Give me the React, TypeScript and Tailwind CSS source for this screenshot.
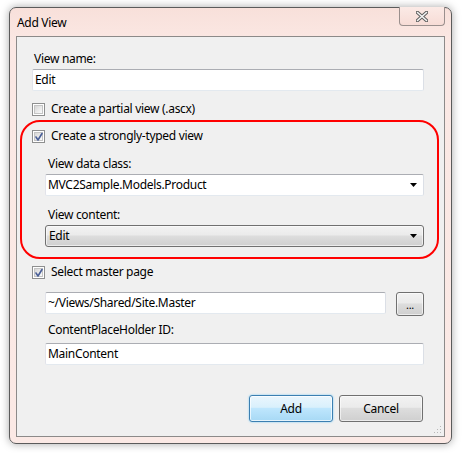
import React from "react";

const font = { fontFamily: '"Segoe UI", "Noto Sans", "Open Sans", sans-serif' };

function CheckBox({ checked }: { checked?: boolean }) {
  return (
    <div className="relative w-[13px] h-[13px] border border-[#8e8f8f] bg-white shrink-0">
      <div className="absolute inset-[1px] bg-[linear-gradient(135deg,#d6d6d6,#fbfbfb)] border border-[#c4c4c4]" />
      {checked && (
        <svg className="absolute left-[1px] top-[1px]" width="10" height="10" viewBox="0 0 10 10">
          <path d="M2 5 L4 8 L8 1.5" fill="none" stroke="#4a5f97" strokeWidth="1.6" strokeLinecap="round" strokeLinejoin="round" />
        </svg>
      )}
    </div>
  );
}

function TextBox({ value, className = "", arrow }: { value: string; className?: string; arrow?: boolean }) {
  return (
    <div
      className={`h-[22px] bg-white border border-t-[#abadb3] border-l-[#e2e3ea] border-r-[#dbdfe6] border-b-[#e3e9ef] rounded-[2px] flex items-center pl-[2px] pr-[6px] text-[12px] text-black ${className}`}
    >
      <span className="flex-1 leading-none">{value}</span>
      {arrow && (
        <svg width="7" height="4" viewBox="0 0 7 4">
          <path d="M0 0 H7 L3.5 4 Z" fill="#000" />
        </svg>
      )}
    </div>
  );
}

function Row({ checked, label, className = "" }: { checked?: boolean; label: string; className?: string }) {
  return (
    <div className={`flex items-center h-[16px] ${className}`}>
      <CheckBox checked={checked} />
      <span className="ml-[6px] text-[12px] leading-[16px] text-black">{label}</span>
    </div>
  );
}

export default function App() {
  return (
    <div className="w-[462px] h-[453px] bg-white pt-[7px] pl-[9px] tracking-[-0.3px]" style={font}>
      <div className="relative w-[443px] h-[437px] rounded-[7px] border border-[#5b5b5b] bg-[linear-gradient(180deg,#f8e0da_0%,#fbe8e4_8%,#fbe9e5_100%)] shadow-[0_0_8px_rgba(0,0,0,0.35)] flex flex-col px-[6px]">
        <div className="h-[28px] flex items-start">
          <span className="mt-[7px] ml-[1px] text-[12px] leading-[16px] text-black">Add View</span>
          <div className="ml-auto -mt-px w-[46px] h-[19px] rounded-b-[4px] border border-t-0 border-[#9a8f8d] bg-[linear-gradient(180deg,#fbeae6,#f7dcd6)] flex items-center justify-center">
            <svg width="12" height="11" viewBox="0 0 12 11">
              <path d="M1.5 1.5 L10.5 9.5 M10.5 1.5 L1.5 9.5" stroke="#5e5e5e" strokeWidth="3.6" strokeLinecap="round" />
              <path d="M1.5 1.5 L10.5 9.5 M10.5 1.5 L1.5 9.5" stroke="#f4f4f4" strokeWidth="1.6" strokeLinecap="round" />
            </svg>
          </div>
        </div>
        <div className="relative h-[401px] border border-[#8c8a89] bg-[#f0f0f0] flex flex-col pt-[14px] pl-[15px] pr-[20px] text-[12px]">
          <span className="ml-[2px] leading-[16px] h-[16px] text-black">View name:</span>
          <TextBox value="Edit" className="mt-[2px]" />
          <Row label="Create a partial view (.ascx)" className="mt-[10px]" />
          <div className="mt-[3px] -ml-[12px] -mr-[15px] h-[139px] border-2 border-[#ff0000] rounded-[20px] flex flex-col pt-[6px] pl-[10px] pr-[13px]">
            <Row checked label="Create a strongly-typed view" />
            <div className="pl-[13px] flex flex-col">
              <span className="mt-[12px] ml-[3px] leading-[16px] h-[16px] text-black">View data class:</span>
              <TextBox value="MVC2Sample.Models.Product" arrow className="mt-[2px]" />
              <span className="mt-[11px] ml-[3px] leading-[16px] h-[16px] text-black">View content:</span>
              <div className="mt-[2px] h-[22px] rounded-[3px] border border-[#707070] bg-[linear-gradient(180deg,#f2f2f2_0%,#ebebeb_45%,#dddddd_50%,#cfcfcf_100%)] shadow-[inset_0_0_0_1px_rgba(255,255,255,0.6)] flex items-center pl-[3px] pr-[6px]">
                <span className="flex-1 leading-none text-black">Edit</span>
                <svg width="7" height="4" viewBox="0 0 7 4">
                  <path d="M0 0 H7 L3.5 4 Z" fill="#000" />
                </svg>
              </div>
            </div>
          </div>
          <Row checked label="Select master page" className="mt-[5px]" />
          <div className="ml-[13px] flex flex-col">
            <div className="mt-[12px] flex items-start">
              <TextBox value="~/Views/Shared/Site.Master" className="w-[341px]" />
              <div className="ml-auto w-[28px] h-[24px] rounded-[3px] border border-[#707070] bg-[linear-gradient(180deg,#f2f2f2_0%,#ebebeb_45%,#dddddd_50%,#cfcfcf_100%)] shadow-[inset_0_0_0_1px_rgba(255,255,255,0.6)] flex items-center justify-center text-[11px] leading-none text-black">
                ...
              </div>
            </div>
            <span className="mt-[6px] ml-[3px] leading-[16px] h-[16px] text-black">ContentPlaceHolder ID:</span>
            <TextBox value="MainContent" className="mt-[5px]" />
            <div className="mt-[30px] flex justify-end gap-[6px] mr-[1px]">
              <div className="w-[84px] h-[27px] rounded-[3px] border border-[#3c7fb1] bg-[linear-gradient(180deg,#eaf6fd_0%,#d9f0fc_45%,#bee6fd_50%,#a7d9f5_100%)] shadow-[inset_0_0_0_1px_rgba(255,255,255,0.7),0_0_2px_#6cc6f5] flex items-center justify-center text-[12px] text-black">
                Add
              </div>
              <div className="w-[84px] h-[27px] rounded-[3px] border border-[#707070] bg-[linear-gradient(180deg,#f2f2f2_0%,#ebebeb_45%,#dddddd_50%,#cfcfcf_100%)] shadow-[inset_0_0_0_1px_rgba(255,255,255,0.6)] flex items-center justify-center text-[12px] text-black">
                Cancel
              </div>
            </div>
          </div>
          <svg className="absolute right-[2px] bottom-[2px]" width="9" height="9" viewBox="0 0 9 9">
            <g fill="#b8b8b8">
              <rect x="7" y="1" width="1" height="1" />
              <rect x="4" y="4" width="1" height="1" />
              <rect x="7" y="4" width="1" height="1" />
              <rect x="1" y="7" width="1" height="1" />
              <rect x="4" y="7" width="1" height="1" />
              <rect x="7" y="7" width="1" height="1" />
            </g>
          </svg>
        </div>
      </div>
    </div>
  );
}
